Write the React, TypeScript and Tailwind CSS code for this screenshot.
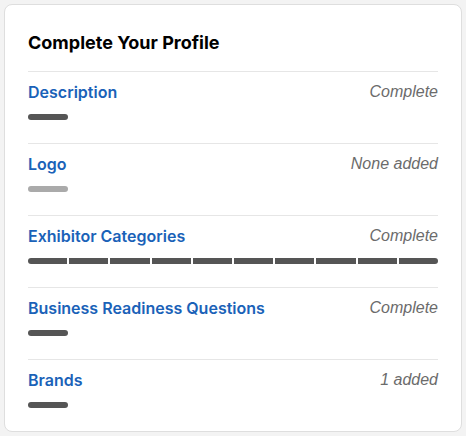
import React from 'react';

interface Item {
  label: string;
  status: string;
  segments: number;
  filled: boolean;
}

const items: Item[] = [
  { label: 'Description', status: 'Complete', segments: 1, filled: true },
  { label: 'Logo', status: 'None added', segments: 1, filled: false },
  { label: 'Exhibitor Categories', status: 'Complete', segments: 10, filled: true },
  { label: 'Business Readiness Questions', status: 'Complete', segments: 1, filled: true },
  { label: 'Brands', status: '1 added', segments: 1, filled: true },
];

const ProgressBar: React.FC<{ segments: number; filled: boolean }> = ({ segments, filled }) => {
  const color = filled ? 'bg-[#555555]' : 'bg-[#aaaaaa]';
  if (segments === 1) {
    return <div className={`h-[6px] w-10 rounded-[3px] ${color}`} />;
  }
  return (
    <div className="flex h-[6px] gap-[2px] overflow-hidden rounded-[3px]">
      {Array.from({ length: segments }).map((_, i) => (
        <div key={i} className={`flex-1 ${color}`} />
      ))}
    </div>
  );
};

export default function App() {
  return (
    <div className="min-h-screen bg-[#f3f3f3] p-1" style={{ fontFamily: '"Liberation Sans", Arial, sans-serif' }}>
      <div className="rounded-lg border border-[#dedede] bg-white px-[23px] pt-6">
        <h2 className="mb-[14px] font-['Inter'] text-lg leading-7 font-bold text-black">Complete Your Profile</h2>
        <div>
          {items.map((item) => (
            <div key={item.label} className="border-t border-[#e6e6e6] pt-[10px] pb-[23px]">
              <div className="flex h-5 items-center justify-between">
                <span className="font-['Inter'] text-[16px] font-semibold text-[#1a62b8]">{item.label}</span>
                <span className="text-[16px] italic text-[#6b6b6b]">{item.status}</span>
              </div>
              <div className="mt-3">
                <ProgressBar segments={item.segments} filled={item.filled} />
              </div>
            </div>
          ))}
        </div>
      </div>
    </div>
  );
}
